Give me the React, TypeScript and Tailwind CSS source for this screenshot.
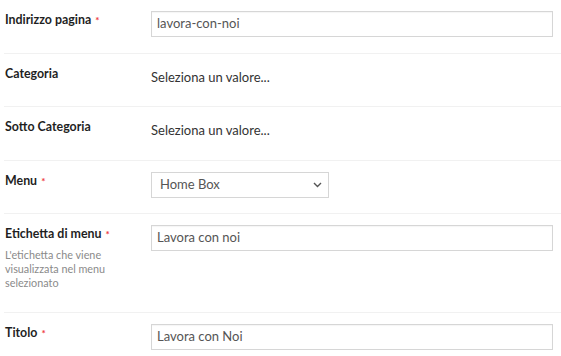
import React from "react";

type Field = {
  label: string;
  required?: boolean;
  help?: string;
  kind: "input" | "select" | "empty";
  value: string;
};

const fields: Field[] = [
  { label: "Indirizzo pagina", required: true, kind: "input", value: "lavora-con-noi" },
  { label: "Categoria", kind: "empty", value: "Seleziona un valore..." },
  { label: "Sotto Categoria", kind: "empty", value: "Seleziona un valore..." },
  { label: "Menu", required: true, kind: "select", value: "Home Box" },
  {
    label: "Etichetta di menu",
    required: true,
    help: "L'etichetta che viene visualizzata nel menu selezionato",
    kind: "input",
    value: "Lavora con noi",
  },
  { label: "Titolo", required: true, kind: "input", value: "Lavora con Noi" },
];

export default function App() {
  return (
    <div className="w-[561px] h-[356px] overflow-hidden bg-white font-['Lato',sans-serif] pl-[4px]">
      {fields.map((field, index) => (
        <div
          key={field.label}
          className={`flex pt-[11px] ${field.help ? "pb-[22px]" : "pb-[15.5px]"} ${
            index > 0 ? "border-t border-[#f1f1f1]" : ""
          }`}
        >
          <div className="w-[147px] shrink-0 pl-[1px] pt-[1px]">
            <div className="text-[12.4px] font-bold text-[#1f1f1f] leading-[16px]">
              {field.label}
              {field.required && (
                <span className="text-[#ee3b3e] text-[10px] align-top ml-[4px] font-bold">*</span>
              )}
            </div>
            {field.help && (
              <div className="mt-[6px] text-[10.8px] leading-[14px] text-[#8a8a8a] w-[130px]">
                {field.help}
              </div>
            )}
          </div>
          <div className="flex-1 pr-[8px]">
            {field.kind === "input" && (
              <div className="h-[26px] border border-[#d6d6d6] shadow-[inset_0_1px_1px_rgba(0,0,0,0.04)] flex items-center px-[5px] text-[13px] text-[#555]">
                {field.value}
              </div>
            )}
            {field.kind === "empty" && (
              <div className="h-[26px] flex items-center text-[13px] text-[#333]">{field.value}</div>
            )}
            {field.kind === "select" && (
              <div className="h-[26px] w-[178px] border border-[#d6d6d6] flex items-center justify-between pl-[8px] pr-[6px] text-[13px] text-[#555]">
                <span>{field.value}</span>
                <svg width="9" height="6" viewBox="0 0 9 6" fill="none">
                  <path d="M1 1l3.5 3.5L8 1" stroke="#555" strokeWidth="1.4" />
                </svg>
              </div>
            )}
          </div>
        </div>
      ))}
    </div>
  );
}
